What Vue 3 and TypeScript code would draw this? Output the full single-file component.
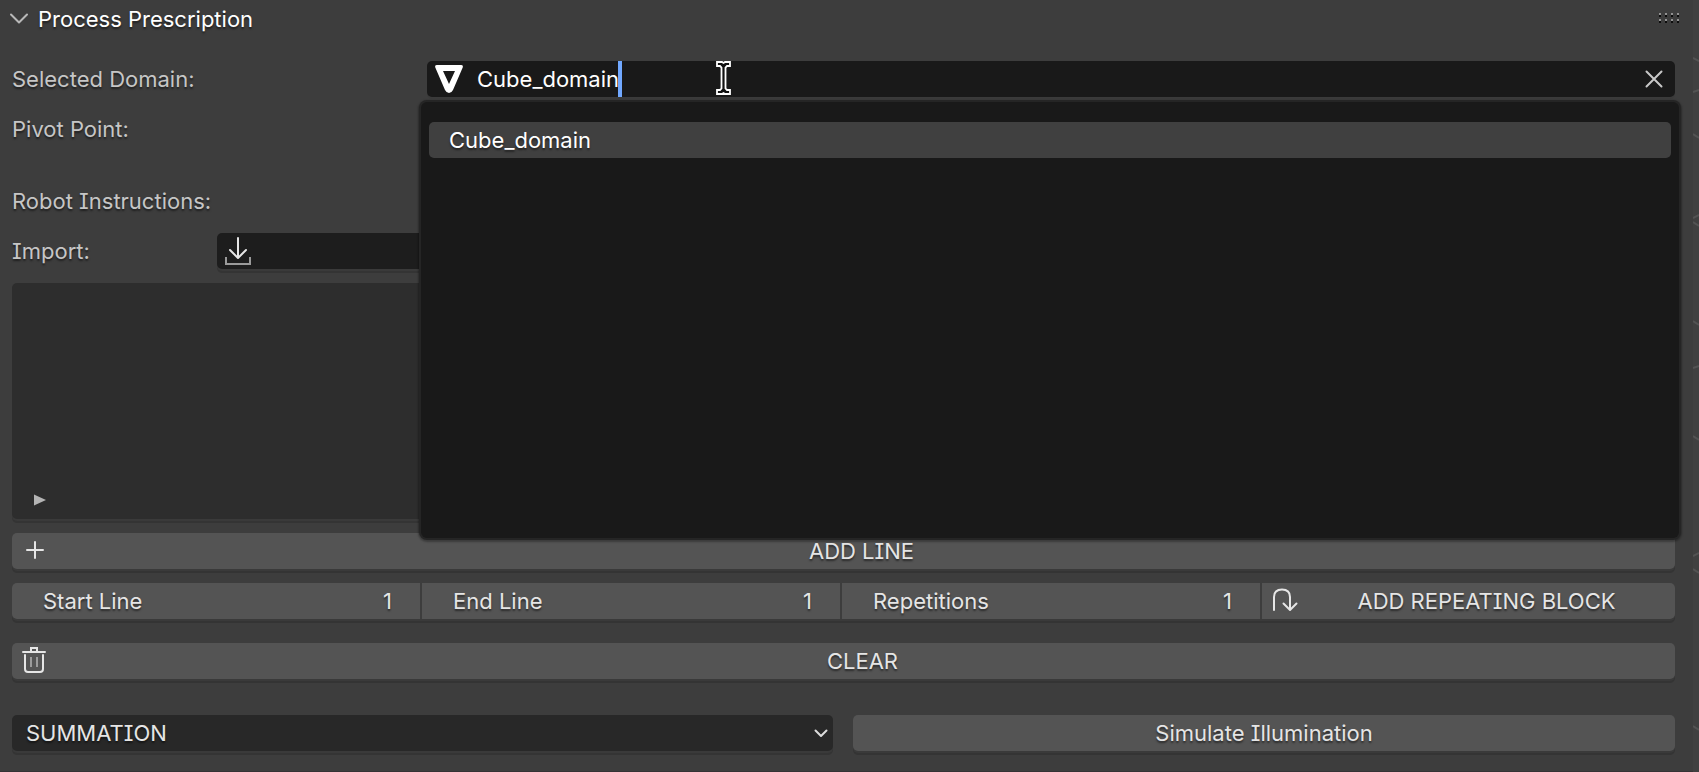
<script setup lang="ts">
import { ref } from 'vue'

interface Spinner {
  id: string
  label: string
  value: string
}

const open = ref(true)
const query = ref('Cube_domain')
const matches = ['Cube_domain']
const mode = ref('SUMMATION')
const spinners = ref<Spinner[]>([
  { id: 'start-line', label: 'Start Line', value: '1' },
  { id: 'end-line', label: 'End Line', value: '1' },
  { id: 'repetitions', label: 'Repetitions', value: '1' },
])
const gripDots = [0, 6, 12, 18]
</script>

<template>
  <div class="editor">
    <section class="panel">
      <header class="head">
        <button class="toggle" type="button" :aria-expanded="open" @click="open = !open">
          <svg width="18" height="12" viewBox="0 0 18 12" aria-hidden="true">
            <path d="M1 1.5 L9 9.5 L17 1.5" fill="none" stroke="#b8b8b8" stroke-width="2" stroke-linecap="round" stroke-linejoin="round" />
          </svg>
          <span>Process Prescription</span>
        </button>
        <svg class="grip" width="20" height="12" viewBox="0 0 20 12" aria-hidden="true">
          <g v-for="x in gripDots" :key="x">
            <rect :x="x" y="0" width="2" height="2" fill="#929292" />
            <rect :x="x" y="2" width="2" height="2" fill="#0c0c0c" />
            <rect :x="x" y="6" width="2" height="2" fill="#929292" />
            <rect :x="x" y="8" width="2" height="2" fill="#0c0c0c" />
          </g>
        </svg>
      </header>

      <div v-if="open" class="body">
        <div class="row split">
          <label class="caption" for="domain">Selected Domain:</label>
          <div class="search">
            <svg width="28" height="28" viewBox="0 0 28 28" aria-hidden="true">
              <path d="M2 0 H26 Q28.5 0 27.7 2.5 L18 25 Q16.5 28 14 28 Q11.5 28 10 25 L0.3 2.5 Q-0.5 0 2 0 Z M8 6 L14 19 L20 6 Z" fill="#fff" fill-rule="evenodd" />
            </svg>
            <span class="entry">
              <input id="domain" v-model="query" type="text" autocomplete="off" spellcheck="false" size="11" />
              <span class="caret"></span>
            </span>
            <svg class="pointer" width="15" height="34" viewBox="0 0 15 34" aria-hidden="true">
              <path d="M1 1 H6 L7.5 2 L9 1 H14 V5 H11 L9.5 6.5 V27.5 L11 29 H14 V33 H9 L7.5 32 L6 33 H1 V29 H4 L5.5 27.5 V6.5 L4 5 H1 Z" fill="#111" stroke="#fff" stroke-width="1.8" />
            </svg>
            <button class="clear-query" type="button" aria-label="Clear domain" @click="query = ''">
              <svg width="18" height="18" viewBox="0 0 18 18" aria-hidden="true">
                <path d="M1.5 1.5 L16.5 16.5 M16.5 1.5 L1.5 16.5" stroke="#c8c8c8" stroke-width="2" stroke-linecap="round" />
              </svg>
            </button>
            <ul class="popup">
              <li v-for="name in matches" :key="name">
                <button class="option" type="button" @click="query = name">{{ name }}</button>
              </li>
            </ul>
          </div>
        </div>

        <div class="row caption pivot">Pivot Point:</div>
        <div class="row caption robot">Robot Instructions:</div>

        <div class="row import">
          <span id="import-label" class="caption">Import:</span>
          <button class="file box" type="button" aria-labelledby="import-label">
            <svg width="26" height="28" viewBox="0 0 26 28" aria-hidden="true">
              <path d="M13 1 V20 M5 13 L13 21 L21 13" fill="none" stroke="#e6e6e6" stroke-width="2" stroke-linecap="round" stroke-linejoin="round" />
              <path d="M1 20 V27 H25 V20" fill="none" stroke="#9a9a9a" stroke-width="2" />
            </svg>
          </button>
        </div>

        <div class="list box">
          <button class="filter" type="button" aria-label="Show filter options">
            <svg width="12" height="12" viewBox="0 0 12 12" aria-hidden="true">
              <path d="M0 0.5 L12 6 L0 11.5 Z" fill="#b4b4b4" />
            </svg>
          </button>
        </div>

        <button class="row box wide add" type="button">
          <svg width="18" height="20" viewBox="0 0 18 20" aria-hidden="true">
            <path d="M9 1 V17 M1 9 H17" stroke="#e6e6e6" stroke-width="2" stroke-linecap="round" />
          </svg>
          <span>ADD LINE</span>
        </button>

        <div class="row box group">
          <div v-for="s in spinners" :key="s.id" class="cell">
            <label :for="s.id">{{ s.label }}</label>
            <input :id="s.id" v-model="s.value" type="text" inputmode="numeric" />
          </div>
          <button class="cell wide repeat" type="button">
            <svg width="26" height="27" viewBox="0 0 26 27" aria-hidden="true">
              <path d="M2 22 V9 Q2 1.5 10 1.5 Q18 1.5 18 9 V21 M11.5 15.5 L18 22 L24.5 15.5" fill="none" stroke="#e6e6e6" stroke-width="2" stroke-linecap="round" stroke-linejoin="round" />
            </svg>
            <span>ADD REPEATING BLOCK</span>
          </button>
        </div>

        <button class="row box wide clear" type="button">
          <svg width="24" height="28" viewBox="0 0 24 28" aria-hidden="true">
            <path d="M1 5 H23 M9 5 V1 H15 V5 M3 8 V22 Q3 25 6 25 H18 Q21 25 21 22 V8" fill="none" stroke="#e6e6e6" stroke-width="2" stroke-linecap="round" />
            <path d="M9 10 V20 M15 10 V20" stroke="#9c9c9c" stroke-width="2" />
          </svg>
          <span>CLEAR</span>
        </button>

        <div class="row actions">
          <div class="menu box">
            <select v-model="mode" aria-label="Illumination mode">
              <option>SUMMATION</option>
            </select>
            <svg width="14" height="9" viewBox="0 0 14 9" aria-hidden="true">
              <path d="M1.5 1.5 L7 7 L12.5 1.5" fill="none" stroke="#dcdcdc" stroke-width="2" stroke-linecap="round" stroke-linejoin="round" />
            </svg>
          </div>
          <button class="box wide" type="button"><span>Simulate Illumination</span></button>
        </div>
      </div>
    </section>
    <svg class="edge" width="6" height="772" viewBox="0 0 6 772" aria-hidden="true">
      <path d="M0 58 L6 61 M0 92 L6 90 M0 134 L6 138 M0 218 L6 215 M0 222 L6 226 M0 321 L6 325 M0 368 L6 366 M0 436 L6 440 M0 556 L6 553 M0 569 L6 573 M0 726 L6 730" fill="none" stroke="#535353" stroke-width="2" />
    </svg>
  </div>
</template>

<style>
body {
  margin: 0;
  background: #3d3d3d;
}
</style>

<style scoped>
* {
  box-sizing: border-box;
}
.editor {
  display: flex;
  min-height: 100vh;
  overflow: hidden;
  background: #3d3d3d;
  color: #e5e5e5;
  font-family: Inter, "Liberation Sans", sans-serif;
  font-size: 22px;
  line-height: 36px;
  font-feature-settings: "cv08" 1;
  text-shadow: 0 2px 2px rgba(0, 0, 0, 0.5);
}
.panel {
  flex: 1;
  min-width: 0;
  padding: 0 18px 20px 12px;
  border-bottom: 1px solid #353235;
}
.edge {
  flex: none;
  background: #404040;
}
button,
input,
select {
  margin: 0;
  padding: 0;
  border: 0;
  background: none;
  color: inherit;
  font: inherit;
  font-feature-settings: inherit;
  text-shadow: inherit;
  outline: none;
}
svg {
  display: block;
  flex: none;
}
.head {
  display: flex;
  justify-content: space-between;
  align-items: center;
  height: 37px;
}
.toggle {
  display: flex;
  align-items: center;
  gap: 10px;
  margin-left: -2px;
  color: #fff;
}
.grip {
  margin-right: -4px;
}
.body {
  padding-top: 24px;
}
.row {
  display: flex;
  align-items: center;
  height: 36px;
}
.caption {
  color: #c6c6c6;
}
.split {
  display: grid;
  grid-template-columns: 415fr 1248fr;
}
.search {
  position: relative;
  display: flex;
  align-items: center;
  height: 36px;
  padding: 0 12px 0 8px;
  border-radius: 5px;
  background: #191919;
  box-shadow: 0 2px 0 #3a3a3a;
}
.entry {
  display: flex;
  align-items: center;
  height: 36px;
  margin-left: 14px;
}
.entry input {
  width: 141px;
  color: #fff;
  text-shadow: none;
}
.caret {
  width: 4px;
  height: 36px;
  background: #71a8ff;
}
.pointer {
  position: absolute;
  left: 289px;
  top: 0;
}
.clear-query {
  margin-left: auto;
}
.popup {
  position: absolute;
  z-index: 2;
  top: 41px;
  left: -6px;
  right: -4px;
  height: 436px;
  margin: 0;
  padding: 20px 8px;
  border-radius: 6px;
  background: #191919;
  box-shadow: 0 0 0 2px #252525, 0 1px 2px 3px rgba(0, 0, 0, 0.3);
  list-style: none;
}
.option {
  display: block;
  width: 100%;
  height: 36px;
  padding: 0 20px;
  border-radius: 5px;
  background: #404040;
  color: #fff;
  text-align: left;
}
.box {
  border-radius: 5px;
  box-shadow: 0 2px 0 #3a3a3a, 0 4px 0 #343434;
}
.pivot {
  margin-top: 14px;
}
.robot {
  margin-top: 36px;
}
.import {
  display: grid;
  grid-template-columns: 205px 1fr;
  margin-top: 14px;
}
.file {
  height: 36px;
  padding-left: 8px;
  background: #1d1d1d;
}
.list {
  display: flex;
  align-items: flex-end;
  height: 236px;
  margin-top: 14px;
  padding: 0 22px 13px;
  background: #2d2d2d;
}
.wide {
  position: relative;
  display: flex;
  align-items: center;
  background: #545454;
}
.wide span {
  flex: 1;
  text-align: center;
}
.add,
.clear {
  width: 100%;
}
.add {
  margin-top: 14px;
  padding-left: 14px;
}
.add span,
.clear span {
  margin-left: 4px;
}
.group {
  display: grid;
  grid-template-columns: minmax(0, 408fr) minmax(0, 418fr) minmax(0, 418fr) minmax(0, 413fr);
  gap: 2px;
  margin-top: 14px;
}
.cell {
  display: flex;
  align-items: center;
  height: 36px;
  padding: 0 28px 0 31px;
  background: #545454;
}
.cell:first-child {
  border-radius: 5px 0 0 5px;
}
.cell:last-child {
  border-radius: 0 5px 5px 0;
}
.cell label {
  flex: none;
}
.cell input {
  flex: 1;
  min-width: 0;
  text-align: right;
}
.repeat {
  padding: 0 0 0 10px;
}
.clear {
  margin-top: 24px;
  padding-left: 10px;
}
.actions {
  display: grid;
  grid-template-columns: 821fr 822fr;
  gap: 20px;
  margin-top: 36px;
}
.menu {
  position: relative;
  display: flex;
  align-items: center;
  height: 36px;
  background: #282828;
}
.menu select {
  width: 100%;
  height: 36px;
  padding-left: 14px;
  appearance: none;
}
.menu svg {
  position: absolute;
  right: 5px;
  pointer-events: none;
}
.actions .wide {
  height: 36px;
}
</style>
